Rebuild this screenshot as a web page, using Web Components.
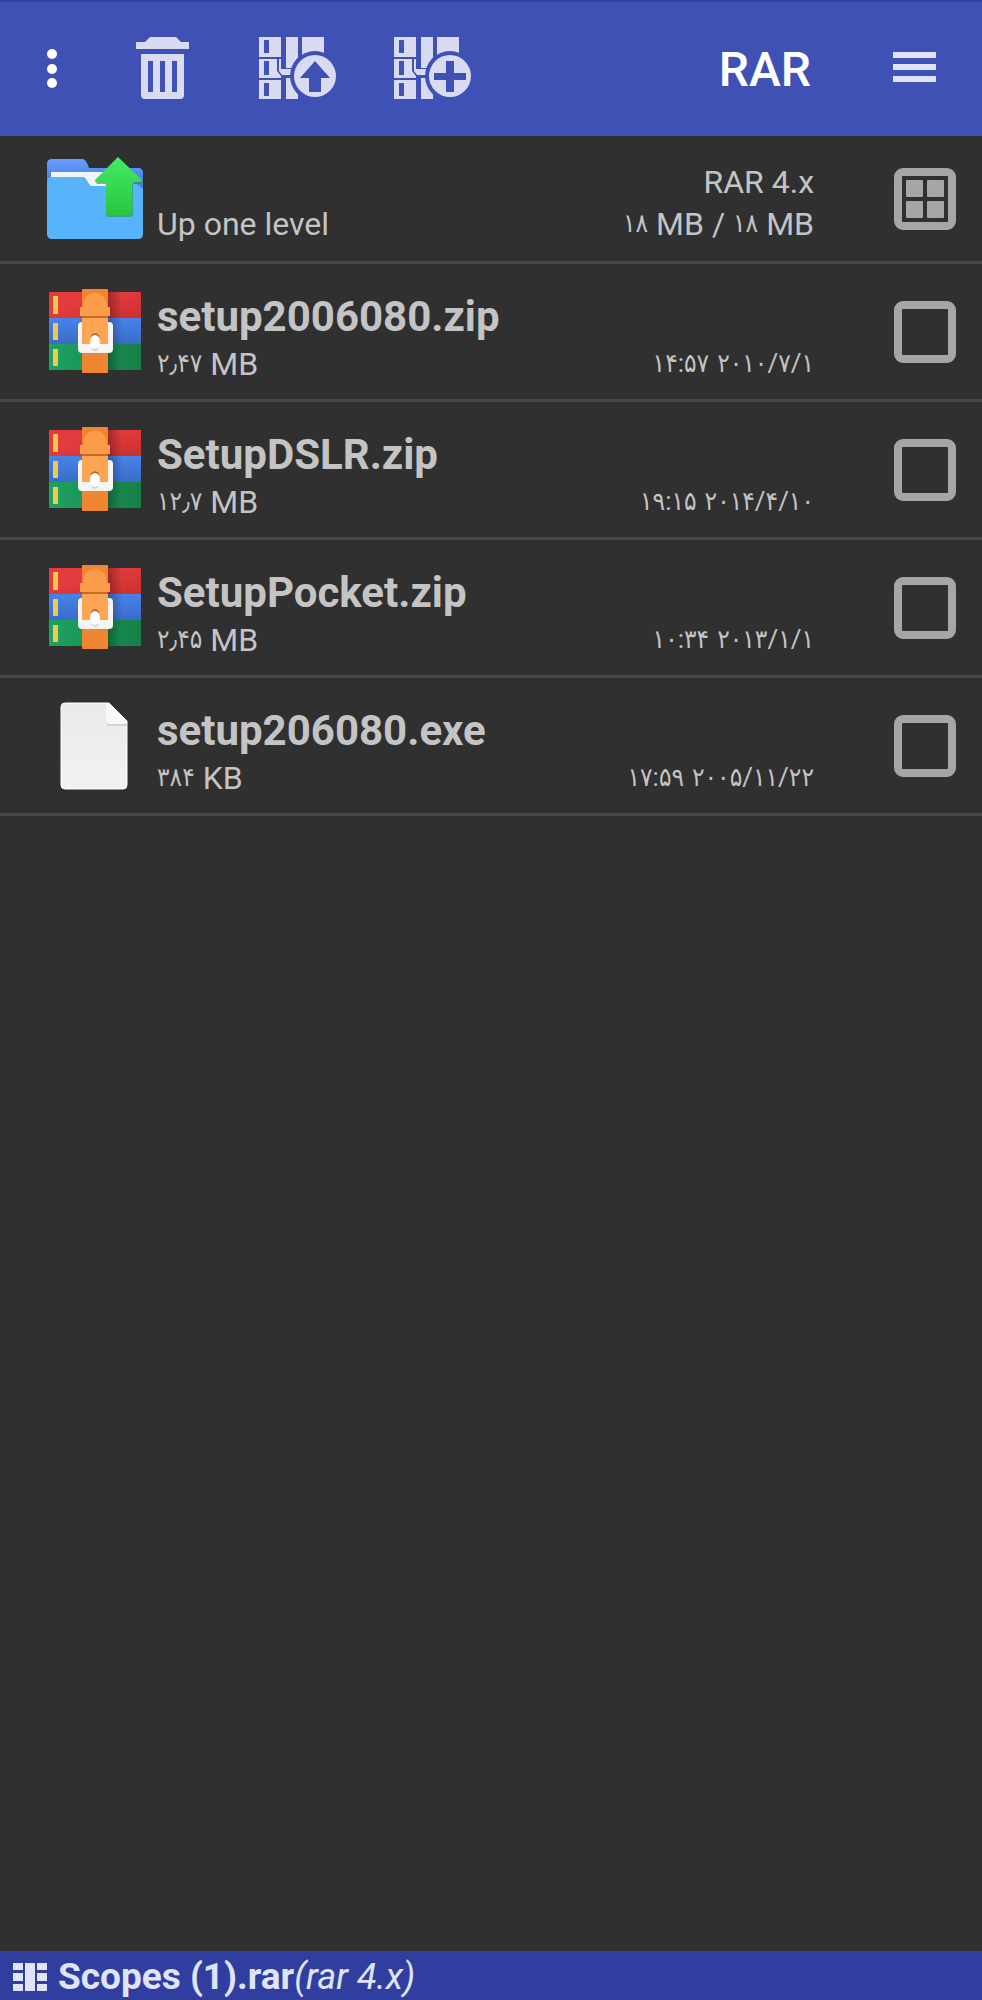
<!DOCTYPE html>
<html lang="en">
<head>
<meta charset="utf-8">
<meta name="viewport" content="width=device-width, initial-scale=1">
<title>RAR</title>
<style>
  body {
    margin: 0;
    background-color: #303030;
    color: #c4c4c4;
    font-family: Roboto, "DejaVu Sans Condensed", "DejaVu Sans", sans-serif;
  }
</style>
</head>
<body>
<rar-app>
  <app-toolbar slot="top" title="RAR"></app-toolbar>
  <up-row label="Up one level" format="RAR 4.x" size="۱۸ MB / ۱۸ MB"></up-row>
  <file-row name="setup2006080.zip" size="۲٫۴۷ MB" date="۱۴:۵۷ ۲۰۱۰/۷/۱"><file-icon kind="archive"></file-icon></file-row>
  <file-row name="SetupDSLR.zip" size="۱۲٫۷ MB" date="۱۹:۱۵ ۲۰۱۴/۴/۱۰"><file-icon kind="archive"></file-icon></file-row>
  <file-row name="SetupPocket.zip" size="۲٫۴۵ MB" date="۱۰:۳۴ ۲۰۱۳/۱/۱"><file-icon kind="archive"></file-icon></file-row>
  <file-row name="setup206080.exe" size="۳۸۴ KB" date="۱۷:۵۹ ۲۰۰۵/۱۱/۲۲"><file-icon kind="file"></file-icon></file-row>
  <status-bar slot="bottom" name="Scopes (1).rar" format="(rar 4.x)"></status-bar>
</rar-app>

<script>
// Persian digits are wrapped so they can be sized against the latin letters
function setText(el, text) {
  el.textContent = '';
  text.split(/([۰-۹٫:/]*[۰-۹][۰-۹٫:/]*)/).forEach(part => {
    if (/[۰-۹]/.test(part)) {
      const span = document.createElement('span');
      span.className = 'num';
      span.textContent = part;
      el.append(span);
    } else {
      el.append(part);
    }
  });
}

const archiveBase = `
  <path fill-rule="evenodd" d="M0 0h22v20H0zM5 3v13h5V3z"/>
  <path fill-rule="evenodd" d="M0 22h18v12l4 5v2H0zM5 24v14h5V24z"/>
  <path fill-rule="evenodd" d="M0 43h22v19H0zM5 46v13h5V46z"/>
  <path d="M27 0h12v31H27zM27 41h12v21H27zM43 0h22v20H43z"/>
  <path d="M20 22h2v10h13v6H23l-3-4z"/>
  <circle class="cut" cx="56" cy="39" r="25"/>
  <circle cx="56" cy="39" r="21"/>`;

class RarApp extends HTMLElement {
  constructor() {
    super();
    this.attachShadow({ mode: 'open' });
    this.shadowRoot.innerHTML = `
      <style>
        :host {
          display: flex;
          flex-direction: column;
          min-height: 100vh;
        }
        main {
          flex: 1;
        }
      </style>
      <slot name="top"></slot>
      <main><slot></slot></main>
      <slot name="bottom"></slot>
    `;
  }
}

class AppToolbar extends HTMLElement {
  constructor() {
    super();
    this.attachShadow({ mode: 'open' });
    this.shadowRoot.innerHTML = `
      <style>
        :host {
          display: block;
        }
        header {
          display: flex;
          align-items: center;
          box-sizing: border-box;
          min-height: 136px;
          padding: 0 0 2px 9px;
          border-top: 2px solid #303f9f;
          background-color: #3f51b5;
        }
        button {
          display: flex;
          align-items: center;
          justify-content: center;
          width: 135px;
          height: 96px;
          padding: 0;
          border: none;
          background: none;
          cursor: pointer;
        }
        .more {
          width: 86px;
        }
        svg {
          display: block;
          fill: #d9dbf3;
        }
        .cut {
          fill: #3f51b5;
        }
        h1 {
          flex: 1;
          margin: 0;
          padding: 4px 36px 0 0;
          text-align: right;
          font-size: 48px;
          line-height: 58px;
          font-weight: 500;
          color: #fff;
        }
      </style>
      <header>
        <button class="more" aria-label="More options">
          <svg width="10" height="40" style="fill:#fff"><circle cx="5" cy="6" r="5"/><circle cx="5" cy="21" r="5"/><circle cx="5" cy="35" r="5"/></svg>
        </button>
        <button aria-label="Delete">
          <svg width="54" height="62" viewBox="0 0 54 62">
            <path d="M0 5h9l5-5h26l5 5h8v7H0z"/>
            <path fill-rule="evenodd" d="M5 17h43v41q0 4-4 4H9q-4 0-4-4zM12 24v31h5V24zM24 24v31h5V24zM36 24v31h5V24z"/>
          </svg>
        </button>
        <button aria-label="Extract">
          <svg width="78" height="62" viewBox="0 0 78 62">${archiveBase}<path class="cut" d="M56 24l15 17h-9v14H50V41h-9z"/></svg>
        </button>
        <button aria-label="Add to archive">
          <svg width="78" height="62" viewBox="0 0 78 62">${archiveBase}<path class="cut" d="M52 24h8v12h12v7H60v12h-8V43H40v-7h12z"/></svg>
        </button>
        <h1></h1>
        <button aria-label="Menu">
          <svg width="43" height="32" style="fill:#dfe4fc"><path d="M0 0h43v6H0zM0 12h43v6H0zM0 24h43v6H0z"/></svg>
        </button>
      </header>
    `;
  }

  connectedCallback() {
    this.shadowRoot.querySelector('h1').textContent = this.getAttribute('title');
  }
}

const rowStyles = `
  :host {
    display: block;
    border-bottom: 3px solid #484848;
  }
  .row {
    display: flex;
    align-items: center;
    gap: 14px;
    padding: 0 26px 0 47px;
  }
  .text {
    flex: 1;
    display: flex;
    align-items: flex-end;
    justify-content: space-between;
    gap: 16px;
    padding-right: 66px;
    font-size: 32px;
    line-height: 42px;
  }
  p {
    margin: 0;
    white-space: nowrap;
  }
  .num {
    font-size: 26px;
    line-height: 26px;
    vertical-align: 3px;
  }
  .right {
    text-align: right;
  }
`;

class UpRow extends HTMLElement {
  constructor() {
    super();
    this.attachShadow({ mode: 'open' });
    this.shadowRoot.innerHTML = `
      <style>
        ${rowStyles}
        .text {
          padding-top: 25px;
          padding-bottom: 16px;
        }
        button {
          width: 62px;
          height: 62px;
          padding: 0;
          border: none;
          background: none;
          cursor: pointer;
        }
        svg {
          display: block;
        }
      </style>
      <div class="row">
        <file-icon kind="up"></file-icon>
        <div class="text">
          <p class="label"></p>
          <div class="right">
            <p class="format"></p>
            <p class="size"></p>
          </div>
        </div>
        <button aria-label="Select all">
          <svg width="62" height="62" viewBox="0 0 62 62" fill="#a6a6a6">
            <rect x="4" y="4" width="54" height="54" rx="5" fill="none" stroke="#a6a6a6" stroke-width="8"/>
            <rect x="12" y="12" width="17" height="17" rx="1"/>
            <rect x="33" y="12" width="17" height="17" rx="1"/>
            <rect x="12" y="33" width="17" height="17" rx="1"/>
            <rect x="33" y="33" width="17" height="17" rx="1"/>
          </svg>
        </button>
      </div>
    `;
  }

  connectedCallback() {
    const root = this.shadowRoot;
    root.querySelector('.label').textContent = this.getAttribute('label');
    root.querySelector('.format').textContent = this.getAttribute('format');
    setText(root.querySelector('.size'), this.getAttribute('size'));
  }
}

class FileRow extends HTMLElement {
  constructor() {
    super();
    this.attachShadow({ mode: 'open' });
    this.shadowRoot.innerHTML = `
      <style>
        ${rowStyles}
        .text {
          padding-top: 27px;
          padding-bottom: 14px;
        }
        .name {
          display: block;
          font-size: 42px;
          line-height: 52px;
          font-weight: 700;
        }
        input {
          appearance: none;
          box-sizing: border-box;
          width: 62px;
          height: 62px;
          margin: 0;
          border: 8px solid #a6a6a6;
          border-radius: 9px;
          cursor: pointer;
        }
        input:checked {
          background: #a6a6a6;
        }
      </style>
      <div class="row">
        <slot></slot>
        <div class="text">
          <div>
            <label class="name" for="pick"></label>
            <p class="size"></p>
          </div>
          <p class="date"></p>
        </div>
        <input type="checkbox" id="pick">
      </div>
    `;
  }

  connectedCallback() {
    const root = this.shadowRoot;
    root.querySelector('.name').textContent = this.getAttribute('name');
    setText(root.querySelector('.size'), this.getAttribute('size'));
    setText(root.querySelector('.date'), this.getAttribute('date'));
  }
}

const icons = {
  up: `
    <defs>
      <linearGradient id="a" x2="0" y2="1"><stop stop-color="#42ec63"/><stop offset="1" stop-color="#2bc53f"/></linearGradient>
      <linearGradient id="b" x2="0" y2="1"><stop stop-color="#689fff"/><stop offset=".4" stop-color="#4a80e8"/></linearGradient>
    </defs>
    <path fill="url(#b)" d="M0 13q0-5 5-5h30q3 0 5 4l2 5h49q5 0 5 5v40H0z"/>
    <path fill="#f1f6fc" d="M4 21h82v18H4z"/>
    <path fill="#57b3fa" d="M0 31q0-5 5-5h31q2 0 3 2l3 5q1 2 3 2h40q-1-4 5-2l6 5v45q0 5-5 5H5q-5 0-5-5z"/>
    <path fill="#249a3c" opacity=".6" d="M71 7l25 24-1 2H86v30q0 3-3 3H62q-3 0-3-3V33H50l-2-3z"/>
    <path fill="url(#a)" d="M71 6l24 23q0 2-2 2h-8v31q0 2-2 2H61q-2 0-2-2V31h-9q-2 0-2-2z"/>`,
  archive: `
    <defs>
      <linearGradient id="r" x2="1" y2="1"><stop stop-color="#e33b3f"/><stop offset=".4" stop-color="#e33b3d"/><stop offset="1" stop-color="#c9302f"/></linearGradient>
      <linearGradient id="u" x2="0" y2="1"><stop stop-color="#4683ea"/><stop offset="1" stop-color="#3a6cc8"/></linearGradient>
      <linearGradient id="g" x2="1" y2="0"><stop stop-color="#1da362"/><stop offset="1" stop-color="#178048"/></linearGradient>
      <linearGradient id="s"><stop stop-color="#000" stop-opacity=".3"/><stop offset="1" stop-color="#000" stop-opacity="0"/></linearGradient>
    </defs>
    <path fill="url(#r)" d="M2 8h92v26H2z"/>
    <path fill="url(#u)" d="M2 34h92v26H2z"/>
    <path fill="url(#g)" d="M2 60h92v26H2z"/>
    <path fill="url(#s)" d="M61 8h14v78H61z"/>
    <path fill="#f3c94b" d="M6 12h5v18H6zM6 39h5v17H6zM6 65h5v17H6z"/>
    <rect x="35" y="5" width="26" height="84" rx="1" fill="#f08532"/>
    <path fill="#fa9c4a" d="M33 23h3c0-19 24-19 24 0h3v9H33z"/>
    <path fill="#c46a2a" d="M35 32h26v2H35z"/>
    <rect x="31" y="38" width="35" height="31" rx="4" fill="#f7f5f3"/>
    <path fill="#fda552" d="M35 34h26v26H35z"/>
    <path fill="#b06630" d="M44 53c0-5 8-5 8 0z"/>
    <ellipse cx="48" cy="58" rx="5" ry="7" fill="#fff"/>
    <path fill="#d8d4d0" d="M44 63q4 4 8 0-1 4-4 4t-4-4z"/>`,
  file: `
    <defs>
      <linearGradient id="p" x2="0" y2="1"><stop stop-color="#eaeaea"/><stop offset="1" stop-color="#f2f2f2"/></linearGradient>
      <linearGradient id="c" x1="1" y1="0" x2="0" y2="1"><stop stop-color="#fff"/><stop offset="1" stop-color="#f6f6f6"/></linearGradient>
    </defs>
    <path fill="url(#p)" stroke="#fff" d="M14 9q0-4 4-4h44l18 18v64q0 4-4 4H18q-4 0-4-4z"/>
    <path fill="#d2d2d2" d="M60 8v20h20v-3z"/>
    <path fill="url(#c)" d="M61 5l19 19v2H63q-4 0-4-4V5z"/>`
};

class FileIcon extends HTMLElement {
  constructor() {
    super();
    this.attachShadow({ mode: 'open' });
  }

  connectedCallback() {
    this.shadowRoot.innerHTML = `
      <style>
        :host {
          display: block;
          flex: none;
        }
        svg {
          display: block;
        }
      </style>
      <svg width="96" height="96" viewBox="0 0 96 96" aria-hidden="true">${icons[this.getAttribute('kind')]}</svg>
    `;
  }
}

class StatusBar extends HTMLElement {
  constructor() {
    super();
    this.attachShadow({ mode: 'open' });
    this.shadowRoot.innerHTML = `
      <style>
        :host {
          display: block;
          background-color: #303f9f;
          color: #e0e4fb;
        }
        footer {
          display: flex;
          align-items: center;
          gap: 11px;
          padding: 4px 13px 1px;
        }
        p {
          margin: 0;
          font-size: 37px;
          line-height: 44px;
          white-space: nowrap;
        }
        em {
          font-size: 36px;
        }
        svg {
          display: block;
          fill: #e0e4fb;
        }
      </style>
      <footer>
        <svg width="34" height="28" viewBox="0 0 34 28" aria-hidden="true">
          <path d="M0 0h10v7H0zM0 10h10v8H0zM0 21h10v7H0zM12 0h10v28H12zM24 0h10v7H24zM24 10h10v8H24zM24 21h10v7H24z"/>
        </svg>
        <p><b></b><em></em></p>
      </footer>
    `;
  }

  connectedCallback() {
    this.shadowRoot.querySelector('b').textContent = this.getAttribute('name');
    this.shadowRoot.querySelector('em').textContent = this.getAttribute('format');
  }
}

customElements.define('file-icon', FileIcon);
customElements.define('rar-app', RarApp);
customElements.define('app-toolbar', AppToolbar);
customElements.define('up-row', UpRow);
customElements.define('file-row', FileRow);
customElements.define('status-bar', StatusBar);
</script>
</body>
</html>
